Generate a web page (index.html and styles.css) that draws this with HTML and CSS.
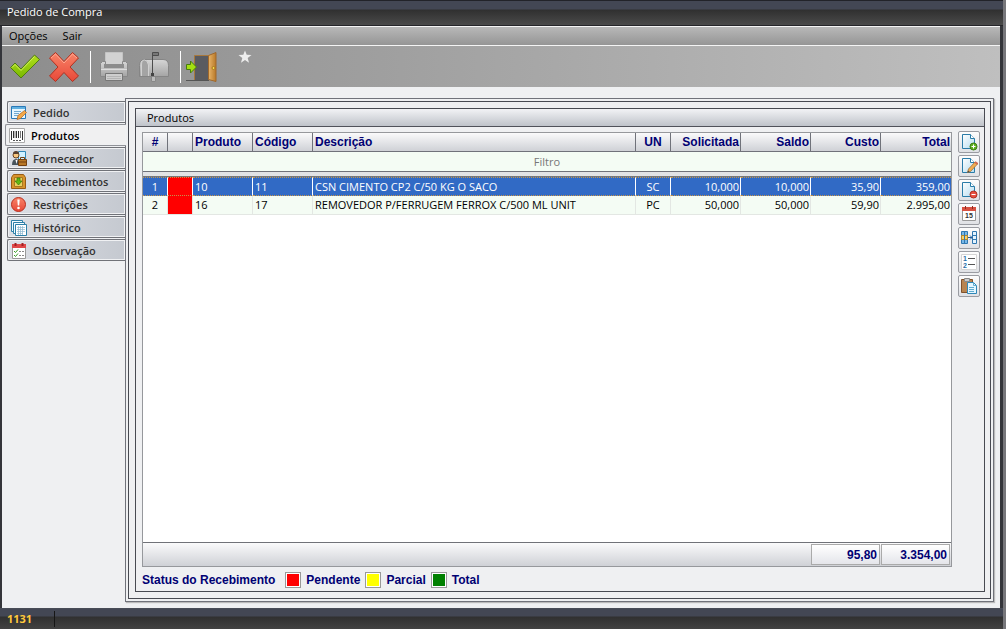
FILE: index.html
```html
<!DOCTYPE html>
<html lang="pt-BR">
<head>
<meta charset="utf-8">
<title>Pedido de Compra</title>
<link rel="stylesheet" href="styles.css">
</head>
<body>
<svg class="defs" width="0" height="0" aria-hidden="true">
  <defs>
    <linearGradient id="green" x1="0" y1="0" x2="0" y2="1"><stop offset="0" stop-color="#b4e01c"/><stop offset="1" stop-color="#78b800"/></linearGradient>
    <linearGradient id="red" x1="0" y1="0" x2="0" y2="1"><stop offset="0" stop-color="#f88468"/><stop offset="1" stop-color="#e84838"/></linearGradient>
    <linearGradient id="metal" x1="0" y1="0" x2="0" y2="1"><stop offset="0" stop-color="#d6d6d6"/><stop offset="1" stop-color="#a4a4a4"/></linearGradient>
    <linearGradient id="page" x1="0" y1="0" x2="1" y2="1"><stop offset="0" stop-color="#fff"/><stop offset="1" stop-color="#b4dcf0"/></linearGradient>
    <linearGradient id="wood" x1="0" y1="0" x2="1" y2="0"><stop offset="0" stop-color="#e8b468"/><stop offset="1" stop-color="#b87828"/></linearGradient>
    <symbol id="sheet" viewBox="0 0 18 18"><path d="M2.500 1.500h8l4 4v10h-12z" fill="url(#page)" stroke="#2a7ca8"/><path d="M10.500 1.500v4h4" fill="#fff" stroke="#2a7ca8"/></symbol>
  </defs>
</svg>
<div class="window">
  <header class="titlebar"><h1>Pedido de Compra</h1></header>
  <div class="frame">
    <nav class="menubar"><button type="button">Opções</button><button type="button">Sair</button></nav>
    <div class="toolbar">
      <button type="button" class="tool" aria-label="Confirmar"><svg width="32" height="32" viewBox="0 0 32 32"><path d="M2.500 16.500l4.500-4.500 6 6L26.500 4l5 4.500-18.500 18.500z" fill="url(#green)" stroke="#4f7d10" stroke-linejoin="round"/><path d="M4 16.500l3-3 6 6L26.500 5.500" fill="none" stroke="#d0f060"/></svg></button>
      <button type="button" class="tool wide" aria-label="Cancelar"><svg width="32" height="32" viewBox="0 0 32 32"><path d="M1.500 7l6-5.500 8.500 9 8.500-9 6 5.500-8.500 9 8.500 9-6 5.500-8.500-9-8.500 9-6-5.500 8.500-9z" fill="url(#red)" stroke="#b03020" stroke-linejoin="round"/><path d="M3 7l4.500-4 8.500 9 8.500-9L29 7" fill="none" stroke="#ffa890"/></svg></button>
      <span class="split"></span>
      <button type="button" class="tool" aria-label="Imprimir"><svg width="32" height="32" viewBox="0 0 32 32"><path d="M7.500 14V1.500h17V14" fill="#d2d2d2" stroke="#c4c4c4"/><path d="M2.500 12.500l2-2h3v4h17v-4h3l2 2v13h-27z" fill="url(#metal)" stroke="#888"/><path d="M6 13h20v4H6z" fill="#8c8c8c"/><path d="M3 18.500h26" stroke="#ddd"/><path d="M7.500 22.500h17v7h-17z" fill="#cecece" stroke="#777"/><path d="M9 25.500h14M9 27.500h14" stroke="#b4b4b4"/></svg></button>
      <button type="button" class="tool wide" aria-label="Correio"><svg width="32" height="32" viewBox="0 0 32 32"><path d="M13.500 25h4v5.500h-4z" fill="#bbb" stroke="#888"/><path d="M6 8.500h19q5.500 0 5.500 6v11H1.500v-11q0-6 5-6z" fill="url(#metal)" stroke="#858585"/><path d="M3.500 25V14q0-5 3-5t4 5v11" fill="#a4a4a4" stroke="#d0d0d0"/><path d="M14.500 23V1.500h6v3h-6" fill="#777" stroke="#4c4c4c"/><path d="M13 22h3v3h-3z" fill="#444"/></svg></button>
      <span class="split"></span>
      <button type="button" class="tool exit" aria-label="Sair"><svg width="34" height="32" viewBox="0 0 34 32"><path d="M9.500 29V4.500h15V29" fill="#5c5c60" stroke="#a8783c"/><path d="M10 5h13v24H10z" fill="#5a5b60"/><path d="M23.500 4.500l7.500-3v29l-7.500-2z" fill="url(#wood)" stroke="#a0682c"/><circle cx="28.500" cy="17" r="1.500" fill="#f8d848" stroke="#a87820"/><path d="M1 29.500h23" stroke="#555"/><path d="M1.500 13.500h4v-3.500l6 6-6 6v-3.500h-4z" fill="#a4e010" stroke="#487c10" stroke-linejoin="round"/></svg></button>
      <button type="button" class="star" aria-label="Favorito"><svg width="14" height="14" viewBox="0 0 14 14"><path d="M7 .5l1.700 4.300 4.800.2-3.800 3 1.300 4.800L7 10l-4 2.800L4.300 8 .5 5l4.800-.2z" fill="#eee"/></svg></button>
    </div>
    <main class="content">
      <nav class="tabs" role="tablist">
        <button type="button" role="tab" class="tab"><svg width="16" height="16" viewBox="0 0 16 16"><path d="M.5 1.500h14v12H.5z" fill="#e6f6ff" stroke="#2878b8"/><path d="M1 2h13v2H1z" fill="#60b0e0"/><path d="M3 6.500h7M3 8.500h5M3 10.500h4" stroke="#70a8d0"/><path d="M6 14.500l1-4 6.500-5 2 2-6 6z" fill="#f4a848" stroke="#a86020" stroke-width=".7"/></svg>Pedido</button>
        <button type="button" role="tab" class="tab active" aria-selected="true"><svg width="16" height="16" viewBox="0 0 16 16"><path d="M.5 .5h15v14H.5z" fill="#fff" stroke="#aaa"/><path d="M2.500 3v9M4.500 3v7M7.500 3v7M9.500 3v7M13.500 3v9" stroke="#333"/><path d="M6 3v7M11.500 3v7" stroke="#777"/><path d="M4 12.500h8" stroke="#555" stroke-dasharray="2 1"/></svg>Produtos</button>
        <button type="button" role="tab" class="tab"><svg width="16" height="16" viewBox="0 0 16 16"><path d="M7.500 .5h7v9h-7z" fill="#d0f0ff" stroke="#3088b8"/><path d="M1 14q0-6 4-6t4 6z" fill="#48545c"/><circle cx="5" cy="4" r="3" fill="#f8c880" stroke="#684020"/><path d="M2 3q0-3 3-3t3 3z" fill="#584030"/><path d="M4.500 9l1 4 1-4" fill="#fff"/><path d="M7.500 8.500h8v6h-8z" fill="#b87828" stroke="#744010"/><path d="M9.500 8V6.500h4V8M8 11h7" fill="none" stroke="#744010"/></svg>Fornecedor</button>
        <button type="button" role="tab" class="tab"><svg width="16" height="16" viewBox="0 0 16 16"><path d="M2.500 .5h10l2 3v11H.5v-11z" fill="#d8942c" stroke="#985c14"/><path d="M3.500 3.500h8v9h-8z" fill="#e8d060" stroke="#a87820"/><path d="M6 4h3v3h2l-3.500 4L4 7h2z" fill="#60b810" stroke="#347808" stroke-width=".7"/></svg>Recebimentos</button>
        <button type="button" role="tab" class="tab"><svg width="16" height="16" viewBox="0 0 16 16"><circle cx="7.500" cy="7.500" r="7" fill="url(#red)" stroke="#b83020"/><path d="M6.300 2.500h2.400l-.5 6H6.800z" fill="#fff"/><circle cx="7.500" cy="11" r="1.300" fill="#fff"/></svg>Restrições</button>
        <button type="button" role="tab" class="tab"><svg width="16" height="16" viewBox="0 0 16 16"><path d="M.5 .5h11v11H.5z" fill="#f4fcff" stroke="#2e80a8"/><path d="M2.500 2.500h11v11h-11z" fill="#f4fcff" stroke="#2e80a8"/><path d="M4.500 4.500h11v11h-11z" fill="#fff" stroke="#2e80a8"/><path d="M6 7.500h8M6 9.500h8M6 11.500h8M6 13.500h6M7.500 6v9M9.500 6v9M11.500 6v9" stroke="#8cb8d0" stroke-width=".7"/></svg>Histórico</button>
        <button type="button" role="tab" class="tab"><svg width="16" height="16" viewBox="0 0 16 16"><path d="M1.500 2.500h13v13h-13z" fill="#fff" stroke="#999"/><path d="M1 1h14v4H1z" fill="#e04848"/><path d="M4.500 0v3M11.500 0v3" stroke="#a02020" stroke-width="2"/><path d="M3 8l1.500 1.500L7 6.500M3 12l1.500 1.500L7 10.500" fill="none" stroke="#38a028"/><path d="M8 8.500h5M8 12.500h5" stroke="#888" stroke-dasharray="2 1"/></svg>Observação</button>
      </nav>
      <div class="panel"><div class="panel-inner">
        <section class="group">
          <h2>Produtos</h2>
          <div class="group-body">
            <div class="grid-column">
              <div class="grid">
                <table>
                  <colgroup><col class="c-num"><col class="c-num"><col class="c-code"><col class="c-code"><col><col class="c-unit"><col class="c-val"><col class="c-val"><col class="c-val"><col class="c-val"></colgroup>
                  <thead>
                    <tr><th class="mid">#</th><th></th><th>Produto</th><th>Código</th><th>Descrição</th><th class="mid">UN</th><th class="right">Solicitada</th><th class="right">Saldo</th><th class="right">Custo</th><th class="right">Total</th></tr>
                    <tr class="filter"><td colspan="10"><input type="text" placeholder="Filtro" aria-label="Filtro"></td></tr>
                    <tr class="divider"><td colspan="10"></td></tr>
                  </thead>
                  <tbody>
                    <tr class="selected"><td class="mid">1</td><td class="pending"></td><td>10</td><td>11</td><td>CSN CIMENTO CP2 C/50 KG O SACO</td><td class="mid">SC</td><td class="right">10,000</td><td class="right">10,000</td><td class="right">35,90</td><td class="right">359,00</td></tr>
                    <tr><td class="mid">2</td><td class="pending"></td><td>16</td><td>17</td><td>REMOVEDOR P/FERRUGEM FERROX C/500 ML UNIT</td><td class="mid">PC</td><td class="right">50,000</td><td class="right">50,000</td><td class="right">59,90</td><td class="right">2.995,00</td></tr>
                  </tbody>
                </table>
                <div class="totals"><output>95,80</output><output>3.354,00</output></div>
              </div>
              <div class="legend"><span class="legend-title">Status do Recebimento</span><i class="swatch s-red"></i><span>Pendente</span><i class="swatch s-yellow"></i><span>Parcial</span><i class="swatch s-green"></i><span>Total</span></div>
            </div>
            <div class="actions">
              <button type="button" aria-label="Adicionar"><svg width="18" height="18" viewBox="0 0 18 18"><use href="#sheet"/><circle cx="13.500" cy="13.500" r="3.500" fill="#60b020" stroke="#387c10"/><path d="M11.500 13.500h4M13.500 11.500v4" stroke="#fff"/></svg></button>
              <button type="button" aria-label="Editar"><svg width="18" height="18" viewBox="0 0 18 18"><use href="#sheet"/><path d="M7.500 15.500l1-3.500 6.500-7 2.500 2-7 7.500z" fill="#f0ac50" stroke="#a0703c" stroke-width=".8"/><path d="M15 5l2.500 2" stroke="#d06850" stroke-width="2"/><path d="M7.500 15.500l.5-2 1.500 1.500z" fill="#444"/></svg></button>
              <button type="button" aria-label="Remover"><svg width="18" height="18" viewBox="0 0 18 18"><use href="#sheet"/><circle cx="13.500" cy="13.500" r="3.500" fill="#e85040" stroke="#b03020"/><path d="M11.500 13.500h4" stroke="#fff"/></svg></button>
              <button type="button" aria-label="Calendário"><svg width="18" height="18" viewBox="0 0 18 18"><path d="M2.500 2.500h13v13h-13z" fill="#fff" stroke="#999"/><path d="M2 2h14v4H2z" fill="#d85040"/><path d="M5.500 1v3M12.500 1v3" stroke="#902c20"/><text x="9" y="13" text-anchor="middle" font-size="7" font-weight="700" fill="#333">15</text></svg></button>
              <button type="button" aria-label="Transferir"><svg width="18" height="18" viewBox="0 0 18 18"><path d="M1.500 2.500h6v12h-6z" fill="#78b8e8" stroke="#3078b0"/><path d="M1.500 6.500h6v4h-6z" fill="#f8d068" stroke="#b88828"/><path d="M4.500 3v11" stroke="#3078b0"/><path d="M12.500 2.500h4v12h-4z" fill="#e4f4ff" stroke="#3078b0"/><path d="M12.500 6.500h4M12.500 10.500h4" stroke="#3078b0"/><path d="M8 8.500h4M10 6.500l2 2-2 2" fill="none" stroke="#205c98"/></svg></button>
              <button type="button" aria-label="Numerar"><svg width="18" height="18" viewBox="0 0 18 18"><path d="M1.500 1.500h15v15h-15z" fill="#fff" stroke="#d4d4d4"/><text x="3" y="8" font-size="7" font-weight="700" fill="#2870a8">1</text><text x="3" y="15" font-size="7" font-weight="700" fill="#2870a8">2</text><path d="M8 5.500h7M8 11.500h7" stroke="#555"/></svg></button>
              <button type="button" aria-label="Colar"><svg width="18" height="18" viewBox="0 0 18 18"><path d="M1.500 2.500h11v13h-11z" fill="#b88450" stroke="#80522c"/><path d="M4.500 1.500h5v3h-5z" fill="#ccc" stroke="#888"/><path d="M7.500 5.500h6l3 3v8h-9z" fill="#e4f6ff" stroke="#3088b8"/><path d="M13.500 5.500v3h3M9 10.500h5M9 12.500h5M9 14.500h5" fill="none" stroke="#60acd0"/></svg></button>
            </div>
          </div>
        </section>
      </div></div>
    </main>
  </div>
  <footer class="statusbar"><span>1131</span></footer>
</div>
</body>
</html>
```
FILE: styles.css
```css
* { box-sizing: border-box; }
body {
  margin: 0;
  min-height: 100vh;
  display: flex;
  font: 11px/16px "Open Sans", "Noto Sans", sans-serif;
  color: #000;
  background: linear-gradient(90deg, #a8a8aa, #77777b);
}
button, input { font: inherit; color: inherit; }
button { border: 0; background: none; padding: 0; cursor: pointer; }
svg { display: block; flex: none; }
.defs { position: absolute; }
.window {
  flex: 1;
  margin-right: 3px;
  display: flex;
  flex-direction: column;
  background: #34353a;
}
.titlebar {
  height: 26px;
  padding: 3px 7px;
  border-top: 1px solid #222329;
  border-bottom: 1px solid #26262a;
  background: linear-gradient(#434754 0 8px, #303030 9px, #4a4a4a);
}
.titlebar h1 { margin: 0; font-size: 11px; line-height: 16px; font-weight: 400; color: #fff; }
.frame { flex: 1; display: flex; flex-direction: column; margin: 0 3px 0 2px; background: #eff0f2; }
.menubar {
  height: 20px;
  display: flex;
  gap: 15px;
  padding: 0 7px;
  border-top: 1px solid #f4f4f4;
  border-bottom: 1px solid #f4f4f4;
  background: linear-gradient(#b8b8b8, #959595);
}
.toolbar {
  height: 41px;
  display: flex;
  align-items: center;
  padding: 0 6px;
  background: linear-gradient(90deg, #8d8d8d, #a0a0a0 40%, #bfbfbf);
}
.tool { margin-right: 8px; }
.tool.wide { margin-right: 10px; }
.split { width: 1px; height: 32px; background: #fff; margin-right: 7px; }
.tool.exit { margin: 0 19px 0 -3px; }
.star { align-self: flex-start; margin-top: 4px; }
.content { flex: 1; display: flex; padding: 11px 6px 6px 3px; }
.tabs { width: 120px; padding-top: 3px; display: flex; flex-direction: column; gap: 1px; }
.tab {
  height: 22px;
  margin-left: 2px;
  padding: 1px 0 0 3px;
  display: flex;
  align-items: center;
  gap: 6px;
  border: 1px solid #707278;
  border-right: 0;
  border-radius: 2px 0 0 2px;
  box-shadow: inset 0 0 0 1px #f0f1f3;
  background: linear-gradient(90deg, #dcdfe5, #c5c9d0);
  font-weight: 600;
  color: #333;
}
.tab.active { margin: 0 -1px 0 0; background: #f0f0f1; color: #000; border-color: #909298; z-index: 1; }
.panel { flex: 1; border: 1px solid #70727a; padding: 2px; box-shadow: 1px 1px 1px #bbb; display: flex; }
.panel-inner { flex: 1; border: 1px solid #484a52; padding: 6px 5px 6px 6px; display: flex; }
.group { flex: 1; border: 1px solid #484a52; display: flex; flex-direction: column; }
.group h2 {
  margin: 0;
  height: 18px;
  padding-left: 11px;
  border-bottom: 1px solid #50525a;
  background: linear-gradient(#f2f3f5, #bfc3ca);
  font-size: 11px;
  line-height: 18px;
  font-weight: 400;
}
.group-body { flex: 1; display: flex; gap: 6px; padding: 4px 4px 0 6px; }
.grid-column { flex: 1; padding-top: 1px; display: flex; flex-direction: column; }
.grid { flex: 1; display: flex; flex-direction: column; justify-content: space-between; border: 1px solid #96989c; background: #fff; }
table { width: 100%; table-layout: fixed; border-collapse: separate; border-spacing: 0; }
.c-num { width: 25px; }
.c-code { width: 60px; }
.c-unit { width: 35px; }
.c-val { width: 70px; }
th, td { padding: 0 2px; text-align: left; white-space: nowrap; }
th {
  height: 19px;
  border-right: 1px solid #70727a;
  border-bottom: 1px solid #70727a;
  background: linear-gradient(#fafafb, #cfd1d6);
  font: 700 12px/18px "Liberation Sans", sans-serif;
  color: #000073;
}
th:last-child, tbody td:last-child { border-right: 0; }
tbody td { height: 19px; line-height: 18px; border-right: 1px solid #e3e7e3; border-bottom: 1px solid #e3e7e3; background: #f4fcf4; }
th.right, td.right { padding-right: 1px; }
.mid { text-align: center; }
.right { text-align: right; }
.filter td { height: 20px; padding: 0; background: #f4fcf4; border-bottom: 1px solid #70727a; }
.filter input { display: block; width: 100%; height: 19px; padding: 0; border: 0; background: none; text-align: center; outline: 0; }
.filter input::placeholder { color: #777; opacity: 1; }
.divider td { height: 5px; background: #e2e3e5; border-bottom: 1px solid #777; }
tbody .selected td { background: #316ac5; color: #fff; border-right-color: #fff; border-top: 1px dotted #c5954a; border-bottom: 1px dotted #c5954a; line-height: 16px; }
tbody .pending, tbody .selected .pending { background: #f00; }
.totals {
  height: 24px;
  display: flex;
  justify-content: flex-end;
  gap: 1px;
  padding: 1px 1px 1px 0;
  border-top: 1px solid #707278;
  background: linear-gradient(#fafafb, #cfd1d6);
}
.totals output {
  width: 69px;
  padding-right: 2px;
  border: 1px solid #aaa;
  background: linear-gradient(#fff, #e4e5ea);
  text-align: right;
  font: 700 12px/20px "Liberation Sans", sans-serif;
  color: #000073;
}
.legend { height: 22px; margin-top: 2px; display: flex; align-items: center; gap: 5px; font: 700 12px/16px "Liberation Sans", sans-serif; color: #000073; }
.legend-title { margin-right: 5px; }
.swatch { width: 16px; height: 16px; border: 1px solid #999; box-shadow: inset 0 0 0 1px #fff; }
.s-red { background: #f00; }
.s-yellow { background: #ff0; }
.s-green { background: #008000; }
.actions { display: flex; flex-direction: column; gap: 2px; font-family: "Liberation Sans", sans-serif; }
.actions button {
  width: 22px;
  height: 22px;
  padding: 1px;
  border: 1px solid #9a9ca2;
  border-radius: 2px;
  background: linear-gradient(#fdfdfd, #dfe1e5);
}
.statusbar {
  height: 21px;
  padding: 2px 5px;
  border-top: 1px solid #484c57;
  background: linear-gradient(#434754 0 7px, #303030 8px, #424242);
  font-weight: 700;
  color: #ffc83c;
}
.statusbar span { display: block; width: 50px; padding-left: 2px; border-right: 1px solid #161616; }
```
